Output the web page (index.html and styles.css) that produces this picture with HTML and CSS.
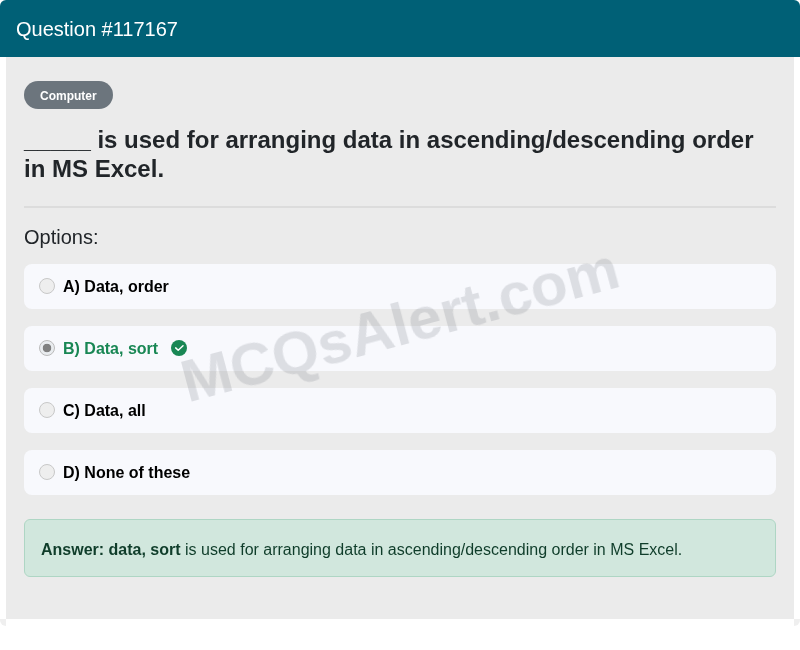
FILE: index.html
```html
<!DOCTYPE html>
<html lang="en">
<head>
    <meta charset="UTF-8">
    <meta name="viewport" content="width=device-width, initial-scale=1.0">
    <title>Question #117167</title>
    <link rel="stylesheet" href="styles.css">
</head>
<body>
    <div class="card">
        <div class="card-header"><span class="label">Question #117167</span></div>
        <div class="card-body">
            <span class="badge"><span class="label">Computer</span></span>
            <h1 class="question label">_____ is used for arranging data in ascending/descending order in MS Excel.</h1>
            <hr class="divider">
            <h2 class="options-title label">Options:</h2>
            <div class="options">
                <label class="option">
                    <span class="radio"></span>
                    <span class="label">A) Data, order</span>
                </label>
                <label class="option correct">
                    <span class="radio checked"></span>
                    <span class="label">B) Data, sort</span>
                    <svg class="check" viewBox="0 0 16 16" width="16" height="16">
                        <circle cx="8" cy="8" r="8" fill="#198754"></circle>
                        <path d="M4.7 7.9l2.5 2.3 4.8-4.4" fill="none" stroke="#fff" stroke-width="1.5" stroke-linecap="round" stroke-linejoin="round"></path>
                    </svg>
                </label>
                <label class="option">
                    <span class="radio"></span>
                    <span class="label">C) Data, all</span>
                </label>
                <label class="option">
                    <span class="radio"></span>
                    <span class="label">D) None of these</span>
                </label>
            </div>
            <div class="answer"><div class="label"><strong>Answer: data, sort</strong> is used for arranging data in ascending/descending order in MS Excel.</div></div>
            <div class="watermark">MCQsAlert.com</div>
        </div>
    </div>
</body>
</html>
```

FILE: styles.css
```css
body {
    font-family: "Liberation Sans", Arial, sans-serif;
    margin: 0;
    background-color: #fff;
    color: #212529;
}
.label {
    display: block;
    will-change: transform;
}
.card {
    height: 626px;
    border-radius: 6px;
    overflow: hidden;
    background: linear-gradient(90deg, #efefef 6px, #fff 6px, #fff 794px, #efefef 794px) bottom / 100% 7px no-repeat;
}
.card-header {
    background-color: #006076;
    color: #fff;
    font-size: 20px;
    line-height: 24px;
    padding: 17px 16px 16px;
}
.card-body {
    position: relative;
    height: 562px;
    box-sizing: border-box;
    margin: 0 6px;
    padding: 24px 18px;
    background-color: #ebebeb;
}
.badge {
    display: inline-block;
    background-color: #6c757d;
    color: #fff;
    font-size: 12px;
    font-weight: bold;
    line-height: 14px;
    padding: 8px 16px 6px;
    border-radius: 14px;
}
.question {
    font-size: 24px;
    line-height: 29px;
    font-weight: bold;
    margin: 16px 0 0;
}
.divider {
    border: 0;
    border-top: 2px solid #dcdcdc;
    margin: 23px 0 17px;
}
.options-title {
    font-size: 20px;
    line-height: 24px;
    font-weight: normal;
    margin: 0 0 15px;
}
.options {
    display: flex;
    flex-direction: column;
    gap: 17px;
}
.option {
    display: flex;
    align-items: center;
    height: 45px;
    box-sizing: border-box;
    padding: 1px 15px 0;
    background-color: #f8f9fd;
    border-radius: 8px;
    color: #000;
    font-weight: bold;
    font-size: 16px;
}
.radio {
    width: 16px;
    height: 16px;
    box-sizing: border-box;
    margin: -3px 8px 0 0;
    border: 1px solid #c8c8c8;
    border-radius: 50%;
    background-color: #eeeeee;
}
.radio.checked {
    background: radial-gradient(circle, #808080 0 4px, #e9ecef 4.6px);
    border-color: #bbb;
}
.correct {
    color: #198754;
}
.check {
    margin: -2px 0 0 13px;
}
.answer {
    margin-top: 24px;
    background-color: #d1e7dd;
    border: 1px solid #aed6c4;
    border-radius: 6px;
    color: #0f3d2a;
    font-size: 16px;
    line-height: 24px;
    padding: 18px 16px 14px;
}
.watermark {
    position: absolute;
    left: 0;
    right: 0;
    top: 231px;
    text-align: center;
    font-size: 60px;
    line-height: 74px;
    font-weight: bold;
    color: rgba(108, 117, 125, 0.2);
    transform: rotate(-15deg);
    pointer-events: none;
}
```
